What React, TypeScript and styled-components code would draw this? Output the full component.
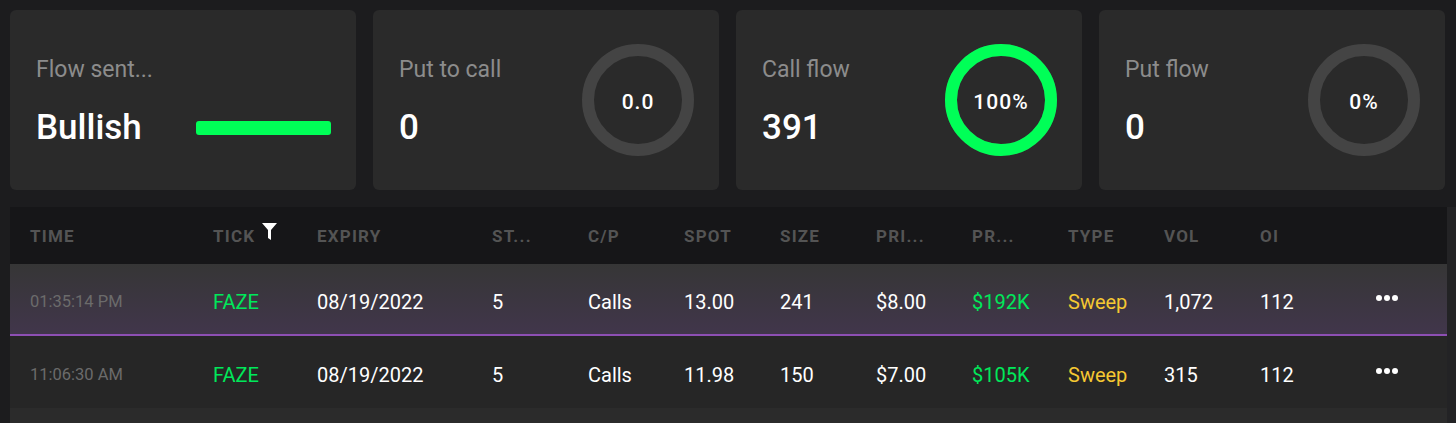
import React from "react";
import styled, { createGlobalStyle } from "styled-components";

const GlobalStyle = createGlobalStyle`
  html, body {
    margin: 0;
    padding: 0;
    background: #1c1c1e;
    font-family: Roboto, "Liberation Sans", sans-serif;
  }
`;

const Page = styled.div`
  width: 1456px;
  height: 423px;
  overflow: hidden;
  background: #1c1c1e;
`;

const Cards = styled.div`
  display: grid;
  grid-template-columns: repeat(4, 346px);
  gap: 17px;
  padding: 10px 10px 0 10px;
`;

const Card = styled.div`
  height: 180px;
  box-sizing: border-box;
  background: #2a2a2a;
  border-radius: 6px;
  padding: 0 25px 0 26px;
  display: flex;
  align-items: center;
  justify-content: space-between;
`;

const CardText = styled.div`
  display: flex;
  flex-direction: column;
  gap: 24px;
  padding-top: 4px;
`;

const CardLabel = styled.div`
  font-size: 23px;
  color: #8c8c8c;
  line-height: 28px;
`;

const CardValue = styled.div`
  font-size: 35px;
  font-weight: 500;
  color: #fff;
  line-height: 40px;
`;

const SentRow = styled.div`
  display: flex;
  align-items: center;
  justify-content: space-between;
  width: 295px;
`;

const SentBar = styled.div`
  width: 135px;
  height: 14px;
  border-radius: 3px;
  background: #00ff57;
`;

const RingWrap = styled.div`
  position: relative;
  width: 112px;
  height: 112px;
`;

const RingLabel = styled.span`
  position: absolute;
  inset: 0;
  display: flex;
  align-items: center;
  justify-content: center;
  color: #fff;
  font-size: 21px;
  font-weight: 500;
  letter-spacing: 1px;
  padding-top: 3px;
`;

const Ring: React.FC<{ value: number; label: string }> = ({ value, label }) => {
  const r = 50;
  const c = 2 * Math.PI * r;
  return (
    <RingWrap>
      <svg width="112" height="112" viewBox="0 0 112 112">
        <circle cx="56" cy="56" r={r} fill="none" stroke="#444444" strokeWidth="12" />
        {value > 0 && (
          <circle
            cx="56"
            cy="56"
            r={r}
            fill="none"
            stroke="#00ff57"
            strokeWidth="12"
            strokeDasharray={`${c * value} ${c}`}
            transform="rotate(-90 56 56)"
          />
        )}
      </svg>
      <RingLabel>{label}</RingLabel>
    </RingWrap>
  );
};

const TableArea = styled.div`
  display: flex;
  margin-top: 17px;
  padding-left: 10px;
`;

const Table = styled.div`
  width: 1437px;
`;

const ScrollTrack = styled.div`
  width: 9px;
  background: #232325;
`;

const cols = "183px 104px 175px 96px 96px 96px 96px 96px 96px 96px 96px 96px 1fr";

const HeaderRow = styled.div`
  display: grid;
  grid-template-columns: ${cols};
  align-items: center;
  height: 57px;
  background: #161618;
`;

const HeadCell = styled.div`
  padding-left: 20px;
  font-size: 17px;
  font-weight: 700;
  letter-spacing: 1.2px;
  color: #545454;
  text-transform: uppercase;
  display: flex;
  align-items: center;
  gap: 7px;
`;

const Row = styled.div<{ $active?: boolean }>`
  display: grid;
  grid-template-columns: ${cols};
  align-items: center;
  height: 72px;
  box-sizing: border-box;
  padding-top: 5px;
  background: ${(p) => (p.$active ? "linear-gradient(180deg, #363636 0%, #41364b 100%)" : "#262626")};
  border-bottom: ${(p) => (p.$active ? "2px solid #8d4fb3" : "0")};
`;

const EmptyRow = styled.div`
  height: 20px;
  background: #2b2b2b;
`;

const Cell = styled.div<{ $tone?: "time" | "green" | "yellow" }>`
  padding-left: 20px;
  font-size: ${(p) => (p.$tone === "time" ? "16.5px" : "20px")};
  color: ${(p) =>
    p.$tone === "time" ? "#6b6b6b" : p.$tone === "green" ? "#00e85a" : p.$tone === "yellow" ? "#f5c832" : "#fff"};
  white-space: nowrap;
`;

const ActionCell = styled.div`
  display: flex;
  justify-content: flex-end;
  padding-right: 49px;
  padding-bottom: 8px;
`;

const FunnelWrap = styled.span`
  display: inline-flex;
  margin-top: -8px;
`;

const Funnel = () => (
  <FunnelWrap>
    <svg width="15" height="17" viewBox="0 0 15 17">
      <path d="M0 0 H15 L9 7 V17 L6 15 V7 Z" fill="#fff" />
    </svg>
  </FunnelWrap>
);

const Dots = () => (
  <svg width="22" height="6" viewBox="0 0 22 6">
    <circle cx="3" cy="3" r="3" fill="#fff" />
    <circle cx="11" cy="3" r="3" fill="#fff" />
    <circle cx="19" cy="3" r="3" fill="#fff" />
  </svg>
);

const headers = ["Time", "Tick", "Expiry", "St...", "C/P", "Spot", "Size", "Pri...", "Pr...", "Type", "Vol", "OI", ""];

const rows = [
  { time: "01:35:14 PM", tick: "FAZE", expiry: "08/19/2022", strike: "5", cp: "Calls", spot: "13.00", size: "241", price: "$8.00", prem: "$192K", type: "Sweep", vol: "1,072", oi: "112" },
  { time: "11:06:30 AM", tick: "FAZE", expiry: "08/19/2022", strike: "5", cp: "Calls", spot: "11.98", size: "150", price: "$7.00", prem: "$105K", type: "Sweep", vol: "315", oi: "112" },
];

export default function App() {
  return (
    <Page>
      <GlobalStyle />
      <Cards>
        <Card>
          <CardText>
            <CardLabel>Flow sent...</CardLabel>
            <SentRow>
              <CardValue>Bullish</CardValue>
              <SentBar />
            </SentRow>
          </CardText>
        </Card>
        <Card>
          <CardText>
            <CardLabel>Put to call</CardLabel>
            <CardValue>0</CardValue>
          </CardText>
          <Ring value={0} label="0.0" />
        </Card>
        <Card>
          <CardText>
            <CardLabel>Call flow</CardLabel>
            <CardValue>391</CardValue>
          </CardText>
          <Ring value={1} label="100%" />
        </Card>
        <Card>
          <CardText>
            <CardLabel>Put flow</CardLabel>
            <CardValue>0</CardValue>
          </CardText>
          <Ring value={0} label="0%" />
        </Card>
      </Cards>
      <TableArea>
        <Table>
          <HeaderRow>
            {headers.map((h, i) => (
              <HeadCell key={i}>
                {h}
                {h === "Tick" && <Funnel />}
              </HeadCell>
            ))}
          </HeaderRow>
          {rows.map((r, i) => (
            <Row key={i} $active={i === 0}>
              <Cell $tone="time">{r.time}</Cell>
              <Cell $tone="green">{r.tick}</Cell>
              <Cell>{r.expiry}</Cell>
              <Cell>{r.strike}</Cell>
              <Cell>{r.cp}</Cell>
              <Cell>{r.spot}</Cell>
              <Cell>{r.size}</Cell>
              <Cell>{r.price}</Cell>
              <Cell $tone="green">{r.prem}</Cell>
              <Cell $tone="yellow">{r.type}</Cell>
              <Cell>{r.vol}</Cell>
              <Cell>{r.oi}</Cell>
              <ActionCell>
                <Dots />
              </ActionCell>
            </Row>
          ))}
          <EmptyRow />
        </Table>
        <ScrollTrack />
      </TableArea>
    </Page>
  );
}
